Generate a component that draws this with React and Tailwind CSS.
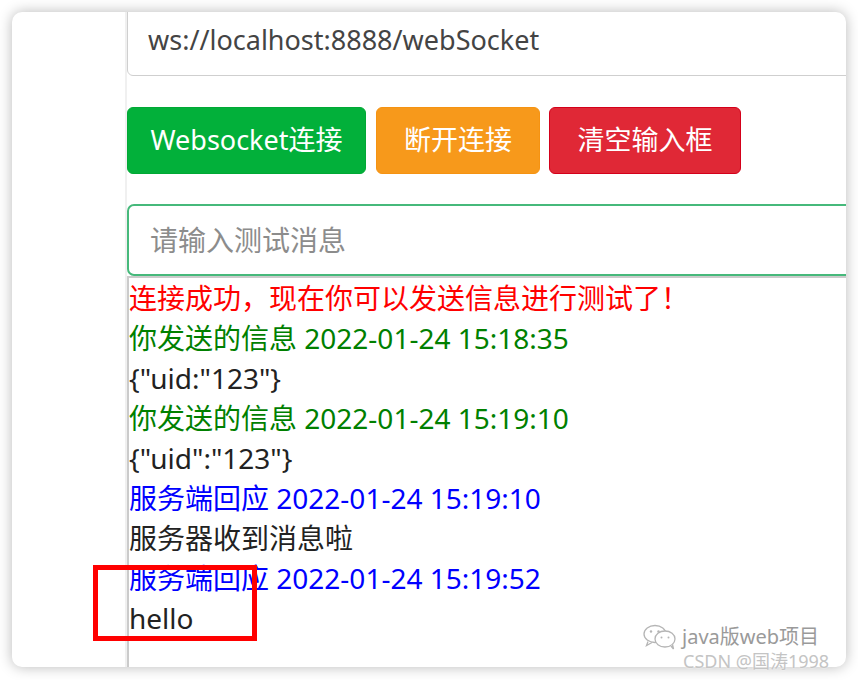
import React from 'react';

const lines = [
  { text: '连接成功，现在你可以发送信息进行测试了！', color: 'text-[#ff0000]' },
  { text: '你发送的信息 2022-01-24 15:18:35', color: 'text-[#008000]' },
  { text: '{"uid:"123"}', color: 'text-[#222222]' },
  { text: '你发送的信息 2022-01-24 15:19:10', color: 'text-[#008000]' },
  { text: '{"uid":"123"}', color: 'text-[#222222]' },
  { text: '服务端回应 2022-01-24 15:19:10', color: 'text-[#0000ff]' },
  { text: '服务器收到消息啦', color: 'text-[#222222]' },
  { text: '服务端回应 2022-01-24 15:19:52', color: 'text-[#0000ff]' },
  { text: 'hello', color: 'text-[#222222]' },
];

function WeChatIcon() {
  return (
    <svg width="36" height="26" viewBox="0 0 36 26" fill="none" stroke="#b5b5b5" strokeWidth="1.3">
      <ellipse cx="13" cy="10" rx="11" ry="8.5" fill="#fff" />
      <path d="M6 17.5 L4.5 21.5 L10 18.5" fill="#fff" />
      <ellipse cx="23" cy="15" rx="10" ry="8" fill="#fff" />
      <path d="M29 22 L31.5 25 L30.5 20.5" fill="#fff" />
      <circle cx="9" cy="7.5" r="1.2" fill="#b5b5b5" stroke="none" />
      <circle cx="16.5" cy="7.5" r="1.2" fill="#b5b5b5" stroke="none" />
      <circle cx="19.5" cy="13.5" r="1" fill="#b5b5b5" stroke="none" />
      <circle cx="26.5" cy="13.5" r="1" fill="#b5b5b5" stroke="none" />
    </svg>
  );
}

export default function App() {
  return (
    <div
      className="w-[858px] h-[680px] bg-white relative overflow-hidden pt-[12px] pl-[12px]"
      style={{ fontFamily: '"Noto Sans", "Noto Sans CJK SC", sans-serif' }}
    >
      {/* window */}
      <div className="w-[834px] h-[655px] rounded-[10px] bg-white shadow-[0_0_14px_rgba(0,0,0,0.28)] overflow-hidden flex">
        <div className="w-[113px] shrink-0"></div>
        <div className="w-[760px] shrink-0 border-l-2 border-[#f0f0f0] flex flex-col">
          {/* url input */}
          <div className="-mt-[8px] h-[72px] border border-[#cfcfcf] rounded-[6px] flex items-center pl-[20px] text-[27px] text-[#444444]">
            ws://localhost:8888/webSocket
          </div>

          {/* buttons */}
          <div className="mt-[31px] flex text-[27px] text-white">
            <button className="w-[239px] h-[67px] rounded-[6px] bg-[#02b03a] border border-[#01a835]">Websocket连接</button>
            <button className="ml-[10px] w-[164px] h-[67px] rounded-[6px] bg-[#f7991b] border border-[#f59312]">断开连接</button>
            <button className="ml-[9px] w-[192px] h-[67px] rounded-[6px] bg-[#e02836] border border-[#d4001a]">清空输入框</button>
          </div>

          {/* message input */}
          <div className="mt-[30px] h-[72px] border-2 border-[#46b97b] rounded-[7px] flex items-center pl-[21px] text-[28px] text-[#8c8c8c]">
            请输入测试消息
          </div>

          {/* output */}
          <div className="flex-1 border-l-2 border-t-2 border-[#cbcbcb] text-[28px] leading-[40px]">
            {lines.map((l, i) => (
              <div key={i} className={l.color + ' whitespace-nowrap'}>{l.text}</div>
            ))}
          </div>
        </div>
      </div>

      {/* annotation box */}
      <div className="absolute left-[93px] top-[565px] w-[164px] h-[76px] border-[5px] border-[#ff0000]"></div>

      {/* watermark */}
      <div className="absolute left-[642px] top-[623px] flex flex-col items-start">
        <div className="h-[27px] flex items-center gap-[4px]">
          <WeChatIcon />
          <span className="text-[20px] leading-[22px] text-[#9a9a9a]" style={{ textShadow: '0 0 2px #fff' }}>java版web项目</span>
        </div>
        <span className="mt-[2px] ml-[41px] text-[18px] leading-[19px] text-[#c4c4c4]" style={{ textShadow: '0 0 2px #fff' }}>CSDN @国涛1998</span>
      </div>
    </div>
  );
}
